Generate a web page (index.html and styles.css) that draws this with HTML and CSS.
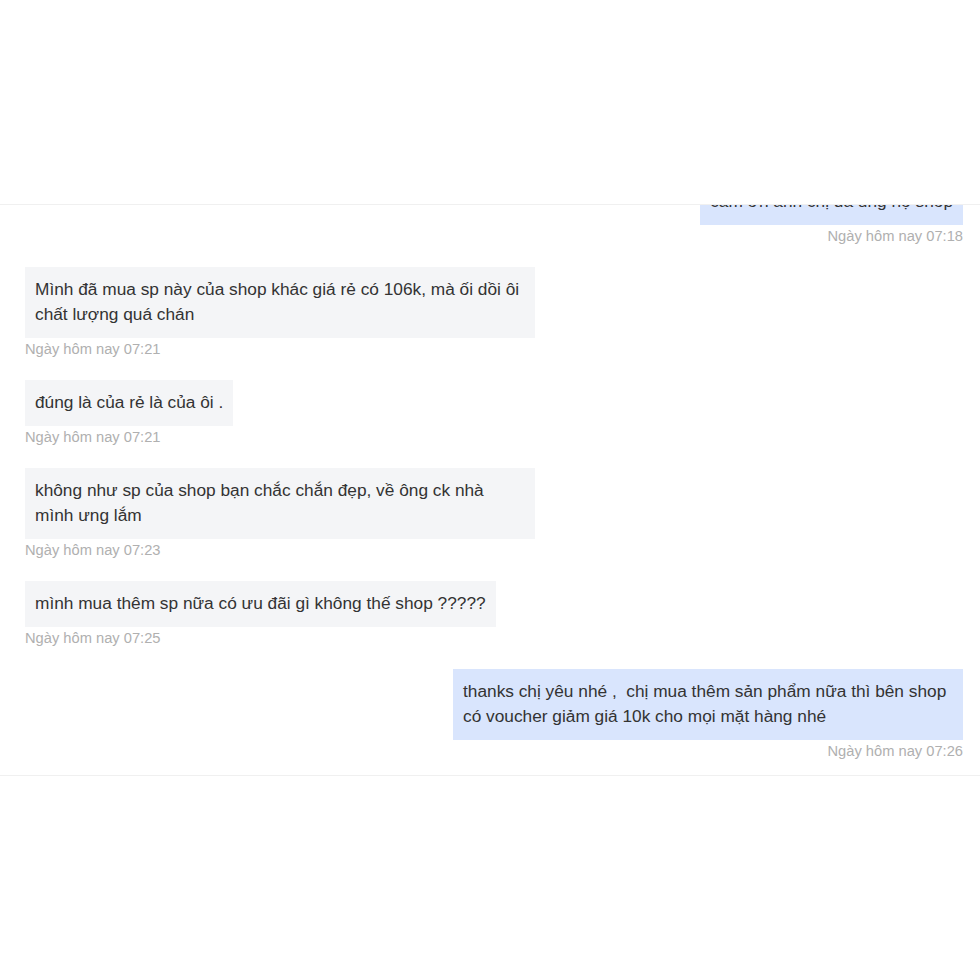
FILE: index.html
```html
<!DOCTYPE html>
<html lang="vi">
<head>
    <meta charset="UTF-8">
    <meta name="viewport" content="width=device-width, initial-scale=1.0">
    <title>Chat</title>
    <link rel="stylesheet" href="styles.css">
</head>
<body>
    <div class="chat-panel">
        <div class="chat-list">
            <div class="msg msg-me">
                <div class="bubble">cảm ơn anh chị đã ủng hộ shop</div>
                <div class="time">Ngày hôm nay 07:18</div>
            </div>
            <div class="msg">
                <div class="bubble">Mình đã mua sp này của shop khác giá rẻ có 106k, mà ối dồi ôi chất lượng quá chán</div>
                <div class="time">Ngày hôm nay 07:21</div>
            </div>
            <div class="msg">
                <div class="bubble">đúng là của rẻ là của ôi .</div>
                <div class="time">Ngày hôm nay 07:21</div>
            </div>
            <div class="msg">
                <div class="bubble">không như sp của shop bạn chắc chắn đẹp, về ông ck nhà mình ưng lắm</div>
                <div class="time">Ngày hôm nay 07:23</div>
            </div>
            <div class="msg">
                <div class="bubble">mình mua thêm sp nữa có ưu đãi gì không thế shop ?????</div>
                <div class="time">Ngày hôm nay 07:25</div>
            </div>
            <div class="msg msg-me">
                <div class="bubble">thanks chị yêu nhé ,&nbsp; chị mua thêm sản phẩm nữa thì bên shop có voucher giảm giá 10k cho mọi mặt hàng nhé</div>
                <div class="time">Ngày hôm nay 07:26</div>
            </div>
        </div>
    </div>
</body>
</html>
```

FILE: styles.css
```css
* {
    margin: 0;
    padding: 0;
    box-sizing: border-box;
}

body {
    font-family: 'Liberation Sans', Arial, sans-serif;
    background: #fff;
    color: #333;
    padding-top: 204px;
}

.chat-panel {
    height: 572px;
    border-top: 1px solid #f0f0f0;
    border-bottom: 1px solid #f0f0f0;
    overflow: hidden;
    display: flex;
    flex-direction: column;
    justify-content: flex-end;
}

.chat-list {
    display: flex;
    flex-direction: column;
    padding: 0 17px 15px 25px;
}

.msg {
    display: flex;
    flex-direction: column;
    align-items: flex-start;
    margin-bottom: 22px;
}

.msg:last-child {
    margin-bottom: 0;
}

.msg-me {
    align-items: flex-end;
}

.bubble {
    max-width: 510px;
    padding: 10px 10px 11px;
    background: #f4f5f7;
    font-size: 17.3px;
    line-height: 25px;
}

.msg-me .bubble {
    background: #d9e5fd;
}

.time {
    margin-top: 2px;
    font-size: 14.7px;
    line-height: 18px;
    color: #b0b0b0;
}
```
